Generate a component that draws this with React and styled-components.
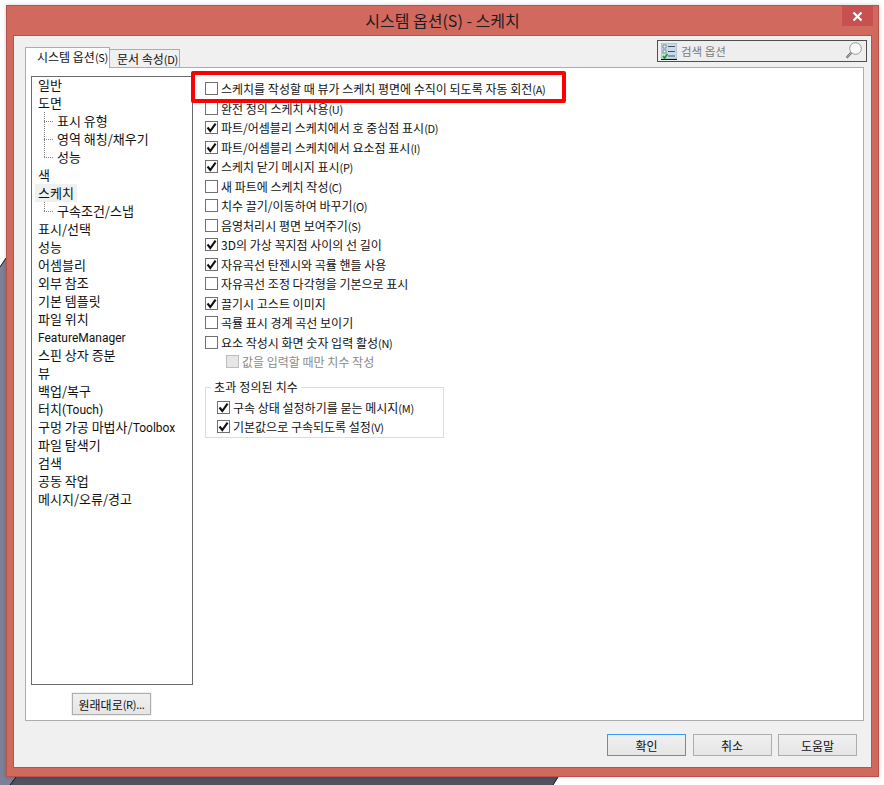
import React from "react";
import styled, {createGlobalStyle} from "styled-components";

const FONT = `"Noto Sans CJK KR", "Noto Sans", sans-serif`;

const Latin = styled.span`
    font-family: Roboto, sans-serif;
    font-size: 12px;
`;

//Tree on the left
const treeItems = [
    {label: "일반"},
    {label: "도면"},
    {label: "표시 유형", child: true},
    {label: "영역 해칭/채우기", child: true},
    {label: "성능", child: true, last: true},
    {label: "색"},
    {label: "스케치", selected: true},
    {label: "구속조건/스냅", child: true, last: true},
    {label: "표시/선택"},
    {label: "성능"},
    {label: "어셈블리"},
    {label: "외부 참조"},
    {label: "기본 템플릿"},
    {label: "파일 위치"},
    {label: <Latin>FeatureManager</Latin>},
    {label: "스핀 상자 증분"},
    {label: "뷰"},
    {label: "백업/복구"},
    {label: <>터치<Latin>(Touch)</Latin></>},
    {label: <>구멍 가공 마법사/<Latin>Toolbox</Latin></>},
    {label: "파일 탐색기"},
    {label: "검색"},
    {label: "공동 작업"},
    {label: "메시지/오류/경고"},
];

//Options on the right
const options = [
    {label: "스케치를 작성할 때 뷰가 스케치 평면에 수직이 되도록 자동 회전", hotkey: "(A)"},
    {label: "완전 정의 스케치 사용", hotkey: "(U)"},
    {label: "파트/어셈블리 스케치에서 호 중심점 표시", hotkey: "(D)", checked: true},
    {label: "파트/어셈블리 스케치에서 요소점 표시", hotkey: "(I)", checked: true},
    {label: "스케치 닫기 메시지 표시", hotkey: "(P)", checked: true},
    {label: "새 파트에 스케치 작성", hotkey: "(C)"},
    {label: "치수 끌기/이동하여 바꾸기", hotkey: "(O)"},
    {label: "음영처리시 평면 보여주기", hotkey: "(S)"},
    {label: "3D의 가상 꼭지점 사이의 선 길이", checked: true},
    {label: "자유곡선 탄젠시와 곡률 핸들 사용", checked: true},
    {label: "자유곡선 조정 다각형을 기본으로 표시"},
    {label: "끌기시 고스트 이미지", checked: true},
    {label: "곡률 표시 경계 곡선 보이기"},
    {label: "요소 작성시 화면 숫자 입력 활성", hotkey: "(N)"},
];

const groupOptions = [
    {label: "구속 상태 설정하기를 묻는 메시지", hotkey: "(M)", checked: true},
    {label: "기본값으로 구속되도록 설정", hotkey: "(V)", checked: true},
];

const Option = ({label, hotkey, checked, disabled}) => (
    <OptionRow $disabled={disabled}>
        <CheckBox $disabled={disabled}>
            {checked && (
                <svg width="11" height="11" viewBox="0 0 11 11">
                    <path d="M1.5 5.5 L4.3 9 L9.6 1.6" fill="none" stroke="#111" strokeWidth="2.1" />
                </svg>
            )}
        </CheckBox>
        <span>{label}{hotkey && <HotKey>{hotkey}</HotKey>}</span>
    </OptionRow>
);

const App = () => {
    return (
        <>
            <GlobalStyle />
            <Backdrop aria-hidden="true" viewBox="0 0 884 785" width="884" height="785">
                <polygon points="0,267 6,258 6,785 0,785" fill="#7d8096" />
                <polygon points="0,785 6,777 16,777 10,785" fill="#7d8096" />
                <polygon points="10,785 16,777 558,777 553,785" fill="#50525f" />
                <path d="M0 267 L6 258 M10 785 L16 777 M553 785 L558 777" stroke="#111" strokeWidth="1" />
            </Backdrop>
            <Window>
                <TitleBar>
                    <Title>시스템 옵션(S) - 스케치</Title>
                    <CloseButton>
                        <svg width="11" height="11" viewBox="0 0 11 11">
                            <path d="M1.5 1.5 L9.5 9.5 M9.5 1.5 L1.5 9.5" stroke="#fff" strokeWidth="2.2" />
                        </svg>
                    </CloseButton>
                </TitleBar>
                <Client>
                    <Header>
                        <Tabs>
                            <Tab $active>시스템 옵션<HotKey>(S)</HotKey></Tab>
                            <Tab>문서 속성<HotKey>(D)</HotKey></Tab>
                        </Tabs>
                        <SearchBox>
                            <svg width="16" height="17" viewBox="0 0 16 17">
                                <rect x="0" y="0" width="16" height="16" fill="#c9dbe8" stroke="#7d96a8" strokeWidth="0.6" />
                                <rect x="0" y="16" width="16" height="1" fill="#111" />
                                <rect x="2" y="2" width="3" height="3" fill="#f4f8fb" stroke="#52697a" strokeWidth="0.7" />
                                <rect x="2" y="7" width="3" height="3" fill="#f4f8fb" stroke="#52697a" strokeWidth="0.7" />
                                <path d="M7 3.5 H14 M7 8.5 H14 M7 13 H14" stroke="#3f5566" strokeWidth="1" />
                                <path d="M2 13 L3.6 15 L6.4 11" fill="none" stroke="#1c9a2c" strokeWidth="1.7" />
                            </svg>
                            <SearchText>검색 옵션</SearchText>
                            <svg width="17" height="18" viewBox="0 0 17 18">
                                <circle cx="10.5" cy="6.5" r="5.8" fill="#fafafa" stroke="#9a9a9a" strokeWidth="1" />
                                <path d="M6.2 10.8 L1.6 15.8" stroke="#666" strokeWidth="2.2" />
                                <path d="M6.2 10.8 L1.6 15.8" stroke="#ddd" strokeWidth="0.7" />
                            </svg>
                        </SearchBox>
                    </Header>
                    <Panel>
                        <Sidebar>
                            <Tree>
                                <TreeList>
                                    {treeItems.map((item, i) => (
                                        <TreeRow key={i}>
                                            {item.child && <Branch $last={item.last} />}
                                            <TreeLabel $selected={item.selected}>{item.label}</TreeLabel>
                                        </TreeRow>
                                    ))}
                                </TreeList>
                            </Tree>
                            <ResetButton>원래대로<HotKey>(R)...</HotKey></ResetButton>
                        </Sidebar>
                        <OptionList>
                            {options.map((option) => (
                                <Option key={option.label} {...option} />
                            ))}
                            <SubOption>
                                <Option label="값을 입력할 때만 치수 작성" disabled />
                            </SubOption>
                            <Group>
                                <Legend>초과 정의된 치수</Legend>
                                {groupOptions.map((option) => (
                                    <Option key={option.label} {...option} />
                                ))}
                            </Group>
                        </OptionList>
                        <Highlight />
                    </Panel>
                    <Footer>
                        <DialogButton $focused>확인</DialogButton>
                        <DialogButton>취소</DialogButton>
                        <DialogButton>도움말</DialogButton>
                    </Footer>
                </Client>
            </Window>
        </>
    );
};

const GlobalStyle = createGlobalStyle`
    html, body{
        margin: 0;
        padding: 0;
        background: #ffffff;
        overflow: hidden;
    }
    body{
        font-family: ${FONT};
        font-size: 12px;
        color: #111;
    }
    #root{
        position: relative;
        width: 884px;
        height: 785px;
        padding: 5px 0 0 6px;
        box-sizing: border-box;
    }
`;

const Backdrop = styled.svg`
    position: absolute;
    top: 0;
    left: 0;
`;

const Window = styled.div`
    position: relative;
    width: 873px;
    height: 772px;
    box-sizing: border-box;
    display: flex;
    flex-direction: column;
    padding: 0 6px 8px 6px;
    background: #d2695f;
    border: 1px solid #b4544c;
    box-shadow: 0 0 4px rgba(0,0,0,0.2);
`;

const TitleBar = styled.div`
    height: 29px;
    flex: none;
    display: flex;
    justify-content: center;
    align-items: center;
    padding-bottom: 2px;
    box-sizing: border-box;
`;

const Title = styled.div`
    font-size: 16px;
    color: #1c1c1c;
`;

const CloseButton = styled.div`
    position: absolute;
    top: 0;
    right: 5px;
    width: 31px;
    height: 20px;
    background: #c75050;
    display: flex;
    align-items: center;
    justify-content: center;
`;

const Client = styled.div`
    flex: 1;
    display: flex;
    flex-direction: column;
    background: #f0f0f0;
    border: 1px solid #b4544c;
    padding: 0 7px 0 11px;
    min-height: 0;
`;

const Header = styled.div`
    height: 31px;
    flex: none;
    display: flex;
    justify-content: space-between;
    align-items: flex-end;
`;

const Tabs = styled.div`
    display: flex;
    align-items: flex-end;
    margin-bottom: -1px;
    position: relative;
    z-index: 1;
`;

const Tab = styled.div`
    box-sizing: border-box;
    height: ${(props) => (props.$active ? "21px" : "19px")};
    width: ${(props) => (props.$active ? "85px" : "70px")};
    display: flex;
    align-items: center;
    white-space: nowrap;
    padding: ${(props) => (props.$active ? "0 0 3px 11px" : "0 0 0 7px")};
    background: ${(props) => (props.$active ? "#ffffff" : "#f0f0f0")};
    border: 1px solid #adadad;
    border-bottom: ${(props) => (props.$active ? "none" : "1px solid #adadad")};
    border-left: ${(props) => (props.$active ? "1px solid #adadad" : "none")};
`;

const HotKey = styled.span`
    font-size: 11px;
    letter-spacing: -0.3px;
`;

const SearchBox = styled.div`
    box-sizing: border-box;
    width: 210px;
    height: 22px;
    margin: 0 -3px 5px 0;
    padding: 0 4px 0 3px;
    display: flex;
    align-items: center;
    background: #eeeeee;
    border: 1px solid #4f4f4f;
`;

const SearchText = styled.span`
    flex: 1;
    margin-left: 4px;
    font-size: 11.5px;
    color: #7a7a7a;
`;

const Panel = styled.div`
    position: relative;
    height: 654px;
    flex: none;
    box-sizing: border-box;
    display: flex;
    background: #ffffff;
    border: 1px solid #adadad;
    padding: 8px 0 0 5px;
`;

const Sidebar = styled.div`
    width: 162px;
    flex: none;
    display: flex;
    flex-direction: column;
    align-items: center;
`;

const Tree = styled.div`
    box-sizing: border-box;
    width: 100%;
    height: 609px;
    padding: 0 0 0 6px;
    border: 1px solid #6a6a6a;
    margin-bottom: 8px;
    font-size: 13px;
`;

const TreeList = styled.div`
    margin-top: -1px;
`;

const TreeRow = styled.div`
    height: 18px;
    display: flex;
    align-items: center;
    white-space: nowrap;
`;

const Branch = styled.span`
    align-self: stretch;
    width: 9px;
    margin: 0 4px 0 6px;
    background:
        repeating-linear-gradient(to bottom, #808080 0 1px, transparent 1px 2px) left top / 1px ${(props) => (props.$last ? "50%" : "100%")} no-repeat,
        repeating-linear-gradient(to right, #808080 0 1px, transparent 1px 2px) left center / 100% 1px no-repeat;
`;

const TreeLabel = styled.span`
    line-height: 18px;
    padding: 0 3px;
    margin-left: -3px;
    background: ${(props) => (props.$selected ? "#f0f0f0" : "transparent")};
`;

const OptionList = styled.div`
    margin-left: 12px;
    padding-top: 3px;
    display: flex;
    flex-direction: column;
`;

const OptionRow = styled.div`
    height: 19.5px;
    display: flex;
    align-items: center;
    gap: 3px;
    white-space: nowrap;
    color: ${(props) => (props.$disabled ? "#8a8a8a" : "#111")};
`;

const CheckBox = styled.span`
    box-sizing: border-box;
    width: 13px;
    height: 13px;
    flex: none;
    display: flex;
    align-items: center;
    justify-content: center;
    background: ${(props) => (props.$disabled ? "#e6e6e6" : "#ffffff")};
    border: 1px solid ${(props) => (props.$disabled ? "#bcbcbc" : "#707070")};
`;

const SubOption = styled.div`
    margin-left: 21px;
`;

const Group = styled.div`
    position: relative;
    box-sizing: border-box;
    width: 239px;
    height: 51px;
    margin-top: 15px;
    padding: 10px 0 0 11px;
    border: 1px solid #dcdcdc;
`;

const Legend = styled.span`
    position: absolute;
    top: -9px;
    left: 5px;
    padding: 0 3px;
    background: #ffffff;
    line-height: 16px;
    letter-spacing: 0.15px;
`;

const Highlight = styled.div`
    position: absolute;
    top: 3px;
    left: 165px;
    width: 375px;
    height: 32px;
    box-sizing: border-box;
    border: 4px solid #ff0000;
    border-radius: 2px;
    pointer-events: none;
`;

const ResetButton = styled.div`
    box-sizing: border-box;
    width: 79px;
    height: 22px;
    margin-right: 1px;
    display: flex;
    align-items: center;
    justify-content: center;
    white-space: nowrap;
    background: linear-gradient(to bottom, #f0f0f0, #e5e5e5);
    border: 1px solid #adadad;
    box-shadow: 0 0 0 1px #f0f0f0;
`;

const Footer = styled.div`
    display: flex;
    justify-content: flex-end;
    gap: 6.5px;
    margin-top: 13px;
    padding-right: 7px;
`;

const DialogButton = styled.div`
    box-sizing: border-box;
    width: 79px;
    height: 22px;
    display: flex;
    align-items: center;
    justify-content: center;
    background: linear-gradient(to bottom, #f0f0f0, #e5e5e5);
    border: 1px solid ${(props) => (props.$focused ? "#3399ff" : "#adadad")};
`;

export default App;
